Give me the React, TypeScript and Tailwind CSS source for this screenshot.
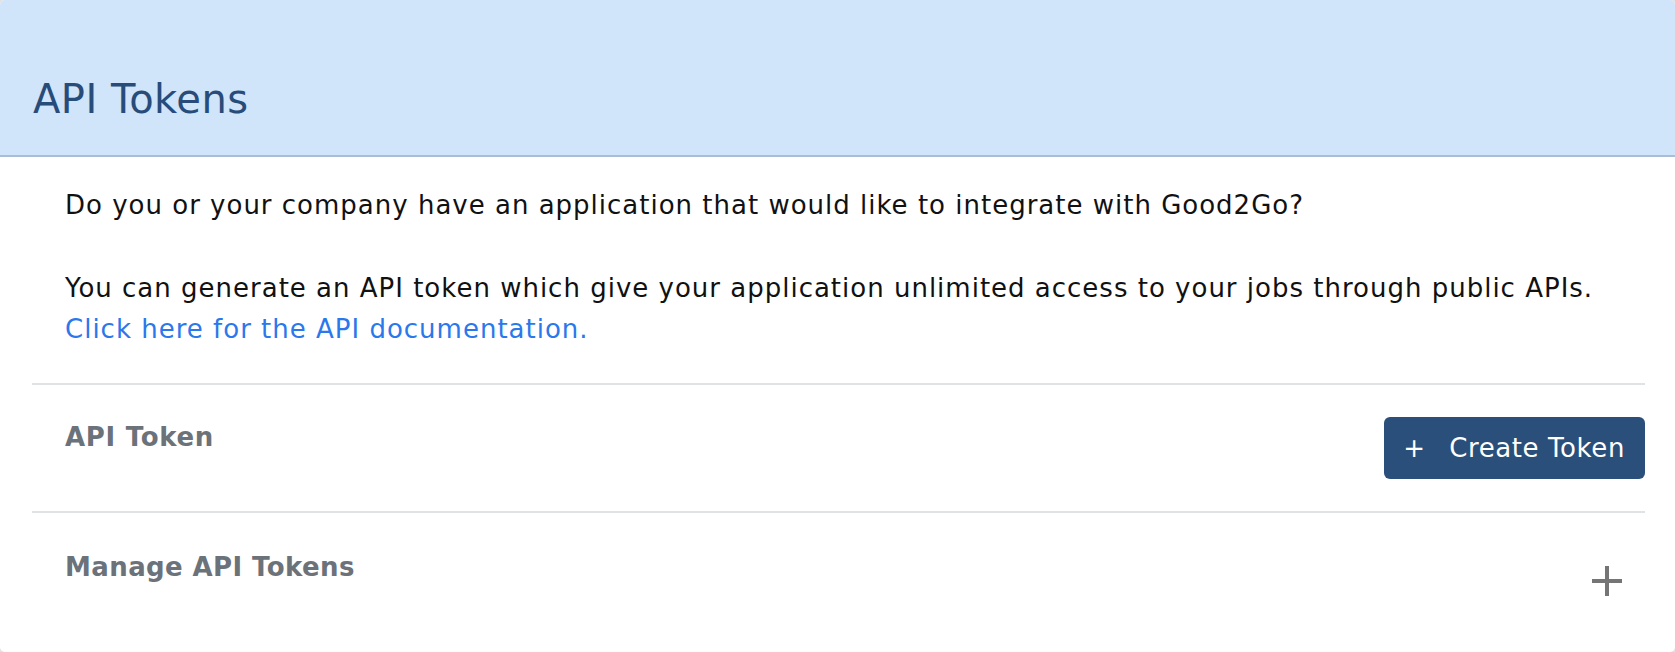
const font = { fontFamily: '"DejaVu Sans", Verdana, sans-serif' }

export default function App() {
  return (
    <div className="bg-[#e2e2e2] h-[652px] w-full" style={font}>
      <div className="h-[652px] bg-white rounded-[5px] overflow-hidden">
        <div className="h-[157px] bg-[#d0e4fa] border-b-2 border-[#a9bed6] pt-[76px] pl-[33px]">
          <h1 className="text-[40px] leading-[46px] tracking-[0.5px] text-[#284c79]">API Tokens</h1>
        </div>

        <div className="pl-[32px] pr-[30px]">
          <div className="pl-[33px] pt-[28px] pb-[33px] text-[26px] leading-[41px] tracking-[1px] text-[#111]">
            <p className="mb-[42px]">Do you or your company have an application that would like to integrate with Good2Go?</p>
            <p>
              You can generate an API token which give your application unlimited access to your jobs through public APIs.
              <br />
              <a href="#" className="text-[#2b78ec]">Click here for the API documentation.</a>
            </p>
          </div>

          <div className="border-t-2 border-[#e0e3e6] flex items-start justify-between pt-[32px] pb-[32px]">
            <div className="pl-[33px] text-[26px] leading-[41px] tracking-[0.7px] font-bold text-[#6b7279]">API Token</div>
            <button className="h-[62px] flex items-center bg-[#2a4f7b] text-white rounded-[6px] pl-[19px] pr-[20px] text-[26px]">
              <span className="leading-none">+</span>
              <span className="ml-[24px] leading-none tracking-[0.6px]">Create Token</span>
            </button>
          </div>

          <div className="border-t-2 border-[#e0e3e6] flex items-start justify-between pt-[34px]">
            <div className="pl-[33px] text-[26px] leading-[41px] tracking-[0.4px] font-bold text-[#6b7279]">Manage API Tokens</div>
            <svg className="w-[30px] h-[30px] mt-[19px] mr-[23px]" viewBox="0 0 30 30">
              <path d="M15 0V30M0 15H30" stroke="#757575" strokeWidth="4" fill="none" />
            </svg>
          </div>
        </div>
      </div>
    </div>
  )
}
